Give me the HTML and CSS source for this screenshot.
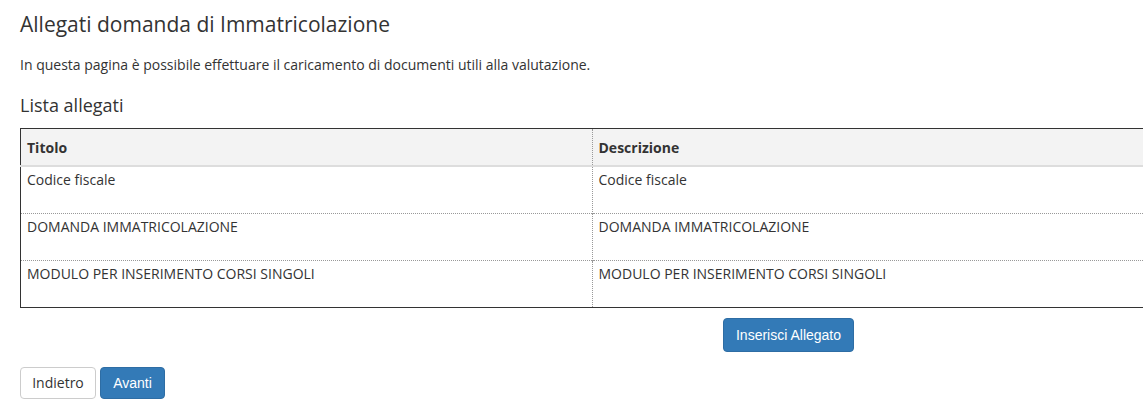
FILE: index.html
```html
<!DOCTYPE html>
<html lang="it">
<head>
<meta charset="utf-8">
<title>Allegati domanda di Immatricolazione</title>
<link rel="stylesheet" href="styles.css">
</head>
<body>
<main class="page">
  <h1 class="title">Allegati domanda di Immatricolazione</h1>
  <p class="intro">In questa pagina è possibile effettuare il caricamento di documenti utili alla valutazione.</p>
  <h2 class="subtitle">Lista allegati</h2>
  <table class="grid">
    <thead>
      <tr><th>Titolo</th><th>Descrizione</th></tr>
    </thead>
    <tbody>
      <tr><td>Codice fiscale</td><td>Codice fiscale</td></tr>
      <tr><td>DOMANDA IMMATRICOLAZIONE</td><td>DOMANDA IMMATRICOLAZIONE</td></tr>
      <tr><td>MODULO PER INSERIMENTO CORSI SINGOLI</td><td>MODULO PER INSERIMENTO CORSI SINGOLI</td></tr>
    </tbody>
  </table>
  <div class="add-row">
    <button class="btn btn-primary btn-add" type="button">Inserisci Allegato</button>
  </div>
  <div class="nav-row">
    <button class="btn btn-default" type="button">Indietro</button>
    <button class="btn btn-primary btn-next" type="button">Avanti</button>
  </div>
</main>
</body>
</html>
```
FILE: styles.css
```css
html, body {
  margin: 0;
  padding: 0;
  background: #fff;
  overflow: hidden;
}
body {
  font-family: "Open Sans", "Liberation Sans", sans-serif;
  color: #333;
  font-size: 14px;
}
.page {
  padding: 0 0 0 20px;
  width: 1144px;
}
.title {
  font-weight: 400;
  font-size: 21px;
  line-height: 24px;
  margin: 0;
  padding-top: 12px;
  color: #333;
}
.intro {
  margin: 0;
  padding-top: 19px;
  font-size: 14px;
  line-height: 20px;
}
.subtitle {
  font-weight: 400;
  font-size: 18px;
  line-height: 22px;
  margin: 0;
  padding-top: 19px;
  padding-bottom: 12px;
}
.grid {
  width: 1144px;
  border-collapse: collapse;
  border: 1px solid #333;
  table-layout: fixed;
}
.grid th {
  background: #f3f3f3;
  text-align: left;
  font-weight: 700;
  font-size: 14px;
  height: 34px;
  padding: 2px 6px 0;
  line-height: 20px;
  vertical-align: middle;
  border-bottom: 2px solid #ddd;
}
.grid th + th,
.grid td + td {
  border-left: 1px dotted #999;
}
.grid td {
  height: 47px;
  padding: 3px 6px 0;
  vertical-align: top;
  font-size: 14px;
  line-height: 20px;
  border-top: 1px dotted #999;
  box-sizing: border-box;
}
.grid tbody tr:first-child td {
  border-top: none;
}
.add-row {
  display: flex;
  padding-left: 703px;
  padding-top: 10px;
}
.nav-row {
  display: flex;
  gap: 4px;
  padding-top: 15px;
}
.btn {
  font-family: "Liberation Sans", Arial, sans-serif;
  font-size: 14px;
  border-radius: 4px;
  line-height: 20px;
  padding: 0;
  cursor: pointer;
}
.btn-primary {
  background: #337ab7;
  border: 1px solid #2e6da4;
  color: #fff;
}
.btn-default {
  background: #fff;
  border: 1px solid #ccc;
  color: #333;
  font-family: "Open Sans", sans-serif;
  font-size: 14px;
  width: 76px;
  height: 32px;
}
.btn-add {
  width: 131px;
  height: 34px;
}
.btn-next {
  width: 65px;
  height: 32px;
}
```
